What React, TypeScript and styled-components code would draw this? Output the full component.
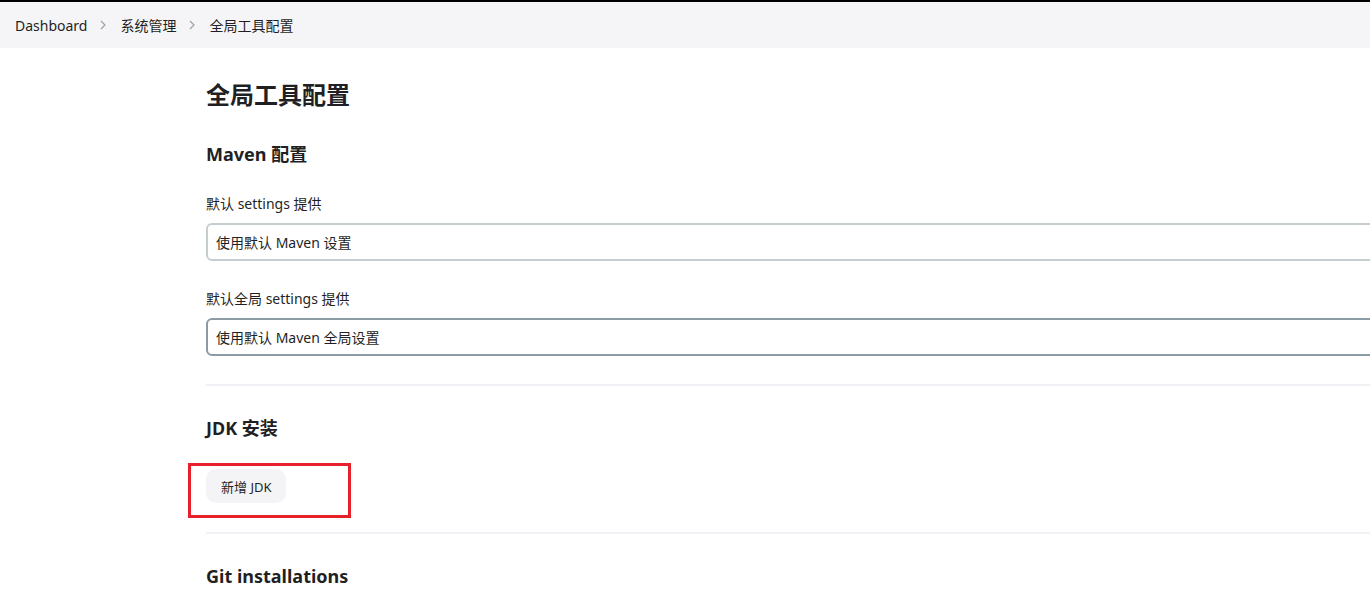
import React from 'react'
import styled, { createGlobalStyle } from 'styled-components'

const GlobalStyle = createGlobalStyle`
  html, body {
    margin: 0;
    padding: 0;
    background: #fff;
    overflow: hidden;
  }
  body {
    font-family: "Noto Sans", "Noto Sans CJK SC", sans-serif;
    color: #1f1f24;
  }
`

const Page = styled.div`
  border-top: 2px solid #000;
  min-height: 601px;
`

const Breadcrumbs = styled.nav`
  display: flex;
  align-items: center;
  height: 46px;
  padding-left: 15px;
  background: #f5f5f7;
  font-size: 14px;
`

const Crumb = styled.span`
  color: #1f1f24;
  white-space: nowrap;
`

const Chevron = styled.svg`
  width: 8px;
  height: 10px;
  margin: 0 13px 0 12px;
  flex-shrink: 0;
`

const Main = styled.main`
  width: 1200px;
  padding: 32px 0 0 206px;
`

const Title = styled.h1`
  margin: 0 0 32px;
  font-size: 24px;
  line-height: 30px;
  font-weight: 700;
`

const SectionTitle = styled.h2`
  margin: 0 0 28px;
  font-size: 18px;
  line-height: 24px;
  font-weight: 700;
`

const Field = styled.div`
  margin-bottom: 28px;
`

const Label = styled.div`
  font-size: 14px;
  line-height: 20px;
  margin-bottom: 9px;
`

const Select = styled.div<{ focused?: boolean }>`
  box-sizing: border-box;
  height: 38px;
  display: flex;
  align-items: center;
  padding: 0 8px;
  border: 2px solid ${p => (p.focused ? '#8a9ba6' : '#c5cdd1')};
  border-radius: 6px;
  font-size: 14px;
  color: #1f1f24;
`

const Divider = styled.hr<{ gap: number }>`
  margin: ${p => p.gap}px 0 30px;
  border: 0;
  height: 2px;
  background: #f1f1f5;
`

const Highlight = styled.div`
  position: relative;
  display: inline-block;
  margin-top: 1px;

  &::after {
    content: '';
    position: absolute;
    left: -18px;
    top: -6px;
    width: 157px;
    height: 49px;
    border: 3px solid #e8202a;
    pointer-events: none;
  }
`

const AddButton = styled.button`
  display: inline-flex;
  align-items: center;
  height: 34px;
  padding: 0 15px;
  border: 0;
  border-radius: 10px;
  background: #f4f4f7;
  font-family: inherit;
  font-size: 13px;
  color: #1f1f24;
  cursor: pointer;
`

const ChevronIcon = () => (
  <Chevron viewBox="0 0 8 10">
    <path d="M2 1l4 4-4 4" fill="none" stroke="#a0a0a8" strokeWidth="1.2" />
  </Chevron>
)

export default function App() {
  return (
    <>
      <GlobalStyle />
      <Page>
        <Breadcrumbs>
          <Crumb>Dashboard</Crumb>
          <ChevronIcon />
          <Crumb>系统管理</Crumb>
          <ChevronIcon />
          <Crumb>全局工具配置</Crumb>
        </Breadcrumbs>
        <Main>
          <Title>全局工具配置</Title>
          <SectionTitle>Maven 配置</SectionTitle>
          <Field>
            <Label>默认 settings 提供</Label>
            <Select>使用默认 Maven 设置</Select>
          </Field>
          <Field>
            <Label>默认全局 settings 提供</Label>
            <Select focused>使用默认 Maven 全局设置</Select>
          </Field>
          <Divider gap={0} />
          <SectionTitle>JDK 安装</SectionTitle>
          <Highlight>
            <AddButton>新增 JDK</AddButton>
          </Highlight>
          <Divider gap={29} />
          <SectionTitle>Git installations</SectionTitle>
        </Main>
      </Page>
    </>
  )
}
